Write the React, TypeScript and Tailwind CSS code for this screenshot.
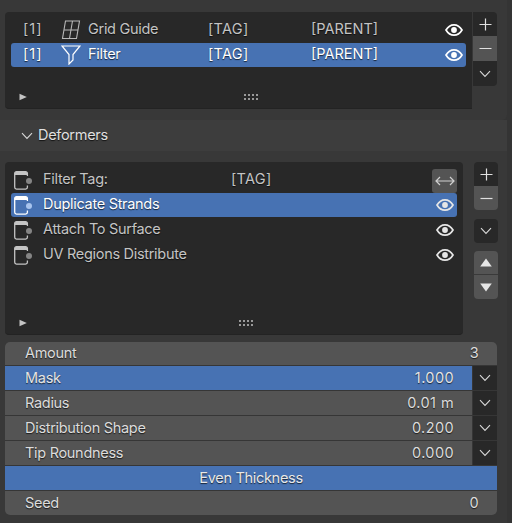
const shadow = '[text-shadow:0_1px_1px_#000000b0]';
const lift = 'mb-[2px]';

const Eye = ({ className = 'text-[#e6e6e6]' }: { className?: string }) => (
  <svg width="18" height="14" viewBox="0 0 18 14" className={className}>
    <path d="M1 7C3 3.6 5.8 1.8 9 1.8S15 3.6 17 7C15 10.4 12.2 12.2 9 12.2S3 10.4 1 7Z" fill="none" stroke="currentColor" strokeWidth="1.7" />
    <circle cx="9" cy="7" r="2.9" fill="currentColor" />
  </svg>
);

const Chevron = () => (
  <svg width="12" height="8" viewBox="0 0 12 8" className="text-[#d8d8d8]">
    <path d="M1 1.2L6 6.4L11 1.2" fill="none" stroke="currentColor" strokeWidth="1.1" />
  </svg>
);

const Plus = () => (
  <svg width="13" height="13" viewBox="0 0 13 13" className="text-[#e0e0e0]">
    <path d="M6.5 0.5V12.5M0.5 6.5H12.5" stroke="currentColor" strokeWidth="1.2" />
  </svg>
);

const Minus = () => (
  <svg width="13" height="3" viewBox="0 0 13 3" className="text-[#e0e0e0]">
    <path d="M0.5 1.5H12.5" stroke="currentColor" strokeWidth="1.2" />
  </svg>
);

const GridIcon = () => (
  <svg width="20" height="20" viewBox="0 0 20 20" className="text-[#b8b8b8]">
    <path d="M4.5 1H18.5L15.5 18.5H1.5Z M3 10H17 M11.5 1L8.5 18.5" fill="none" stroke="currentColor" strokeWidth="1.1" />
  </svg>
);

const FilterIcon = () => (
  <svg width="20" height="20" viewBox="0 0 20 20" className="text-white">
    <path d="M1 1H19L12 9.5V15L8 19V9.5Z" fill="none" stroke="currentColor" strokeWidth="1.2" />
  </svg>
);

const ModIcon = ({ active }: { active?: boolean }) => (
  <svg width="18" height="19" viewBox="0 0 18 19" className={active ? 'text-white' : 'text-[#c4c4c4]'}>
    <path d="M13.4 5V2.5A1.8 1.8 0 0 0 11.6 0.7H2.5A1.8 1.8 0 0 0 0.7 2.5V16.3A1.8 1.8 0 0 0 2.5 18.1H11.6A1.8 1.8 0 0 0 13.4 16.3V14.5" fill="none" stroke="currentColor" strokeWidth="1.3" />
    <path d="M0.7 2.5A1.8 1.8 0 0 1 2.5 0.7H11.6A1.8 1.8 0 0 1 13.4 2.5V4H0.7Z" fill="currentColor" />
    <circle cx="15" cy="10" r="3" className={active ? 'fill-[#a8c4ee]' : 'fill-[#858585]'} />
  </svg>
);

const ListFooter = ({ gripClass }: { gripClass: string }) => (
  <div className="mt-auto flex h-[20px] items-center pb-[2px] pl-[8px]">
    <svg width="8" height="8" viewBox="0 0 8 8" className="text-[#c4c4c4]">
      <path d="M0.5 0.8L7.8 4L0.5 7.2Z" fill="currentColor" />
    </svg>
    <div className={`grid grid-cols-4 gap-[2px] ${gripClass}`}>
      {Array.from({ length: 8 }).map((_, i) => (
        <span key={i} className="h-[2px] w-[2px] bg-[#9a9a9a]" />
      ))}
    </div>
  </div>
);

const SideButton = ({ children, light, className = '' }: { children: React.ReactNode; light?: boolean; className?: string }) => (
  <div className={`flex h-[24px] w-[24px] items-center justify-center ${light ? 'bg-[#545454]' : 'bg-[#282828]'} ${className}`}>
    {children}
  </div>
);

const TopRow = ({ name, icon, active }: { name: string; icon: React.ReactNode; active?: boolean }) => (
  <div className={`flex h-[24px] items-center rounded-[3px] pr-[3px] ${shadow} ${active ? 'bg-[#4772b3] text-white' : 'text-[#c4c4c4]'}`}>
    <span className={`ml-[12px] w-[38px] tracking-[1px] ${lift}`}>[1]</span>
    <span className="w-[27px]">{icon}</span>
    <span className={`w-[120px] ${lift}`}>{name}</span>
    <span className={`w-[103px] tracking-[0.3px] ${lift}`}>[TAG]</span>
    <span className={`w-[134px] tracking-[0px] ${lift}`}>[PARENT]</span>
    <Eye className="text-white" />
  </div>
);

const ModRow = ({ name, active }: { name: string; active?: boolean }) => (
  <div className={`flex h-[24px] items-center justify-between rounded-[3px] pl-[3px] pr-[3px] ${shadow} ${active ? 'bg-[#4772b3] text-white' : 'text-[#c4c4c4]'}`}>
    <div className="flex items-center gap-[11px]">
      <ModIcon active={active} />
      <span className={lift}>{name}</span>
    </div>
    <Eye />
  </div>
);

const PropRow = ({ label, value, active, menu, height = 'h-[24px]' }: { label: string; value: string; active?: boolean; menu?: boolean; height?: string }) => (
  <div className={`flex ${height}`}>
    <div className={`flex flex-1 items-center justify-between pl-[20px] pr-[18px] ${shadow} ${active ? 'bg-[#4772b3] text-[#e4e4e4]' : 'bg-[#545454] text-[#dcdcdc]'}`}>
      <span>{label}</span>
      <span className="tracking-[0.4px]">{value}</span>
    </div>
    {menu && (
      <div className="ml-[1px] flex w-[24px] items-center justify-center bg-[#282828]">
        <Chevron />
      </div>
    )}
  </div>
);

export default function App() {
  return (
    <div className="h-[523px] w-[512px] overflow-hidden bg-[#343434] font-['Inter',sans-serif] text-[14.5px] leading-none tracking-[-0.3px]">
      {/* Top panel */}
      <div className="flex h-[120px] w-[507px] items-start gap-[1px] rounded-br-[5px] bg-[#383838] pl-[5px] pt-[12px]">
        <div className="flex h-[97px] w-[467px] flex-col rounded-l-[4px] border-b border-[#232323] bg-[#282828] px-[6px] pt-[6px]">
          <TopRow name="Grid Guide" icon={<GridIcon />} />
          <div className="mt-[1px]">
            <TopRow name="Filter" icon={<FilterIcon />} active />
          </div>
          <ListFooter gripClass="ml-[217px]" />
        </div>
        <div className="flex w-[24px] flex-col overflow-hidden rounded-r-[4px]">
          <SideButton><Plus /></SideButton>
          <SideButton light className="h-[25px]"><Minus /></SideButton>
          <SideButton className="h-[25px]"><Chevron /></SideButton>
        </div>
      </div>

      {/* Deformers */}
      <div className="flex h-[31px] w-[507px] items-center gap-[5px] bg-[#3d3d3d] pl-[21px] text-[#e0e0e0]">
        <Chevron />
        <span className={shadow}>Deformers</span>
      </div>

      <div className="h-[372px] w-[507px] bg-[#383838] pl-[5px] pt-[11px]">
        <div className="flex gap-[11px]">
          <div className="flex h-[173px] w-[458px] flex-col rounded-[4px] border-b border-[#232323] bg-[#282828] px-[6px] pt-[6px]">
            <div className={`flex h-[25px] items-center justify-between pl-[3px] text-[#c4c4c4] ${shadow}`}>
              <div className="flex items-center">
                <ModIcon />
                <span className={`ml-[11px] w-[188px] ${lift}`}>Filter Tag:</span>
                <span className={`tracking-[0.3px] ${lift}`}>[TAG]</span>
              </div>
              <div className="flex h-[24px] w-[25px] items-center justify-center rounded-[3px] bg-[#545454]">
                <svg width="20" height="10" viewBox="0 0 20 10" className="text-[#d0d0d0]">
                  <path d="M1 5H19M5 1L1 5L5 9M15 1L19 5L15 9" fill="none" stroke="currentColor" strokeWidth="1.2" />
                </svg>
              </div>
            </div>
            <ModRow name="Duplicate Strands" active />
            <div className="mt-[1px]"><ModRow name="Attach To Surface" /></div>
            <div className="mt-[1px]"><ModRow name="UV Regions Distribute" /></div>
            <ListFooter gripClass="ml-[212px]" />
          </div>
          <div className="flex w-[24px] flex-col">
            <SideButton className="rounded-t-[4px]"><Plus /></SideButton>
            <SideButton light className="rounded-b-[4px]"><Minus /></SideButton>
            <SideButton className="mt-[9px] rounded-[4px]"><Chevron /></SideButton>
            <SideButton light className="mt-[8px] rounded-t-[4px] border-b border-[#3a3a3a]">
              <svg width="12" height="9" viewBox="0 0 12 9" className="text-[#e6e6e6]"><path d="M6 0.5L11.8 8.5H0.2Z" fill="currentColor" /></svg>
            </SideButton>
            <SideButton light className="rounded-b-[4px]">
              <svg width="12" height="9" viewBox="0 0 12 9" className="text-[#e6e6e6]"><path d="M6 8.5L11.8 0.5H0.2Z" fill="currentColor" /></svg>
            </SideButton>
          </div>
        </div>

        {/* Properties */}
        <div className="mt-[7px] flex w-[492px] flex-col gap-[1px] overflow-hidden rounded-[5px] bg-[#363636]">
          <PropRow label="Amount" value="3" height="h-[23px]" />
          <PropRow label="Mask" value="1.000" active menu />
          <PropRow label="Radius" value="0.01 m" menu />
          <PropRow label="Distribution Shape" value="0.200" menu />
          <PropRow label="Tip Roundness" value="0.000" menu />
          <div className={`flex h-[24px] items-center justify-center bg-[#4772b3] text-[#e8e8e8] ${shadow}`}>Even Thickness</div>
          <PropRow label="Seed" value="0" />
        </div>
      </div>
    </div>
  );
}
